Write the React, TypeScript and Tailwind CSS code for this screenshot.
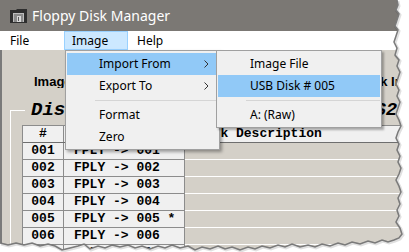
import React from "react";

const ui = { fontFamily: '"Noto Sans", "Liberation Sans", sans-serif' };
const mono = { fontFamily: '"Liberation Mono", "Courier New", monospace' };

function Chevron() {
  return (
    <svg width="5" height="8" viewBox="0 0 5 8" className="block">
      <path d="M0.5 0.5 L4 4 L0.5 7.5" fill="none" stroke="#333" strokeWidth="1" />
    </svg>
  );
}

function FloppyIcon() {
  return (
    <svg width="17" height="14" viewBox="0 0 17 14" className="block">
      <path d="M0 1 H6 L7 0 H17 V14 H0 Z" fill="#2e2e2e" />
      <rect x="3" y="4" width="11" height="9" fill="#bdbdbd" />
      <rect x="4" y="5" width="9" height="8" fill="#8a8a8a" />
      <rect x="7" y="7" width="4" height="6" fill="#d8d8d8" />
      <rect x="8" y="8" width="1" height="4" fill="#5a5a5a" />
    </svg>
  );
}

function MenuItem({ label, active, arrow }: { label: string; active?: boolean; arrow?: boolean }) {
  return (
    <div className={`h-[22px] flex items-center justify-between pl-[32px] pr-[9px] ${active ? "bg-[#91c9f7]" : ""}`}>
      <span className="text-[12px] text-black leading-none">{label}</span>
      {arrow ? <Chevron /> : null}
    </div>
  );
}

function Sep() {
  return (
    <div className="h-[7px] flex items-center">
      <div className="h-px flex-1 ml-[28px] bg-[#d5d5d5]" />
    </div>
  );
}

const rows = ["001", "002", "003", "004", "005", "006", "007"];

const tearRight: [number, number][] = [
  [397, 0], [398, 5], [396, 10], [399, 14], [397, 20], [395, 26], [398, 30], [396, 36], [394, 42], [397, 48],
  [395, 55], [399, 60], [397, 66], [400, 72], [398, 78], [396, 84], [399, 90], [397, 96], [400, 102], [398, 108],
  [396, 114], [399, 120], [401, 126], [398, 132], [396, 138], [399, 144], [397, 150], [400, 156], [398, 162],
  [401, 168], [399, 174], [396, 180], [399, 186], [401, 192], [398, 198], [400, 204], [397, 210], [399, 216],
  [396, 222], [400, 228], [402, 234], [399, 238],
];
const tearBottom: [number, number][] = [
  [394, 240], [388, 242], [382, 240], [375, 243], [368, 241], [360, 244], [352, 242], [345, 245], [338, 243],
  [330, 246], [322, 244], [315, 247], [308, 245], [300, 247], [292, 244], [285, 247], [278, 245], [270, 248],
  [262, 246], [255, 249], [248, 247], [240, 250], [232, 247], [225, 249], [218, 246], [210, 249], [202, 247],
  [195, 250], [188, 246], [180, 248], [172, 245], [165, 248], [158, 246], [150, 249], [142, 246], [135, 248],
  [128, 245], [120, 247], [112, 245], [105, 248], [98, 246], [90, 249], [84, 244], [78, 246], [70, 248],
  [62, 250], [55, 246], [48, 244], [40, 246], [32, 243], [24, 245], [16, 243], [8, 245], [0, 243],
];
const tearPts = [...tearRight, ...tearBottom];
const tearLine = tearPts.map((p, i) => `${i === 0 ? "M" : "L"}${p[0]} ${p[1]}`).join(" ");
const tearFill = `M409 0 ${tearPts.map((p) => `L${p[0]} ${p[1]}`).join(" ")} L0 252 L409 252 Z`;

export default function App() {
  return (
    <div className="relative w-[409px] h-[252px] overflow-hidden bg-white flex flex-col" style={ui}>
      {/* Title bar */}
      <div className="h-[31px] bg-[#7b7874] flex items-center pl-[10px] shrink-0">
        <FloppyIcon />
        <span className="ml-[5px] text-[14px] text-white leading-none">Floppy Disk Manager</span>
      </div>
      {/* Menu bar */}
      <div className="h-[19px] bg-white flex items-stretch text-[12px] text-black shrink-0">
        <div className="w-[64px] pl-[10px] flex items-center">File</div>
        <div className="w-[64px] pl-[7px] flex items-center bg-[#cce8ff] border border-[#99d1ff]">Image</div>
        <div className="pl-[9px] flex items-center">Help</div>
      </div>
      {/* Body */}
      <div className="flex-1 bg-[#d4d0c8] border-l-2 border-[#7a7a7a] flex flex-col">
        <div className="mt-[23px] h-[16px] flex items-center text-[13px] font-bold text-black leading-none" style={{ fontFamily: '"Liberation Sans", Arial, sans-serif' }}>
          <div className="w-[358px] shrink-0 pl-[32px] whitespace-nowrap overflow-hidden">Image File: C:\Floppy\Disks.img</div>
          <div className="whitespace-nowrap">Disk Info</div>
        </div>
        <fieldset className="mt-[10px] ml-[8px] border-l border-t border-r-0 border-b-0 border-white p-0 m-0 min-w-0 flex-1">
          <legend className="ml-[14px] px-[6px] h-[22px] flex items-center text-[19px] font-bold italic text-black leading-none whitespace-nowrap" style={mono}>
            <span>Disks</span>
            <span className="w-[275px]" />
            <span>FS2</span>
          </legend>
          <div className="ml-[11px] mt-[4px] border-l border-t border-[#8c8c8c] text-[13px] font-bold text-black" style={mono}>
            <div className="h-[17px] flex bg-[#f0f0f0] border-b border-[#6e6e6e]">
              <div className="w-[41px] border-r border-[#8c8c8c] flex items-center justify-center">#</div>
              <div className="w-[121px] border-r border-[#8c8c8c] flex items-center pl-[10px]">Disk Name</div>
              <div className="flex-1 flex items-center pl-[12px] whitespace-nowrap">Disk Description</div>
            </div>
            {rows.map((r) => (
              <div key={r} className="h-[17px] flex">
                <div className="w-[41px] bg-[#f0f0f0] border-r border-b border-[#8c8c8c] flex items-center justify-center">{r}</div>
                <div className="w-[121px] bg-[#f0f0f0] border-r border-b border-[#8c8c8c] flex items-center pl-[10px] whitespace-pre">
                  {`FPLY -> ${r}${r === "005" ? " *" : ""}`}
                </div>
                <div className="flex-1 border-b border-white" />
              </div>
            ))}
          </div>
        </fieldset>
      </div>

      {/* Image dropdown menu */}
      <div className="absolute left-[65px] top-[50px] w-[155px] bg-[#f0f0f0] border border-[#a0a0a0] px-[1px] pt-[2px] pb-[1px] shadow-[2px_2px_3px_rgba(0,0,0,0.35)]">
        <MenuItem label="Import From" active arrow />
        <MenuItem label="Export To" arrow />
        <Sep />
        <MenuItem label="Format" />
        <MenuItem label="Zero" />
      </div>
      {/* Submenu */}
      <div className="absolute left-[216px] top-[50px] w-[166px] bg-[#f0f0f0] border border-[#a0a0a0] px-[1px] pt-[2px] pb-[1px] shadow-[2px_2px_2px_rgba(0,0,0,0.3)]">
        <MenuItem label="Image File" />
        <MenuItem label="USB Disk # 005" active />
        <Sep />
        <MenuItem label="A: (Raw)" />
      </div>

      {/* Torn paper edge */}
      <svg className="absolute inset-0 pointer-events-none" width="409" height="252" viewBox="0 0 409 252">
        <path d={tearFill} fill="#ffffff" />
        <path d={tearLine} fill="none" stroke="#000" strokeOpacity="0.12" strokeWidth="3" transform="translate(1 1)" />
        <path d={tearLine} fill="none" stroke="#7a7a7a" strokeWidth="1.5" />
      </svg>
    </div>
  );
}
